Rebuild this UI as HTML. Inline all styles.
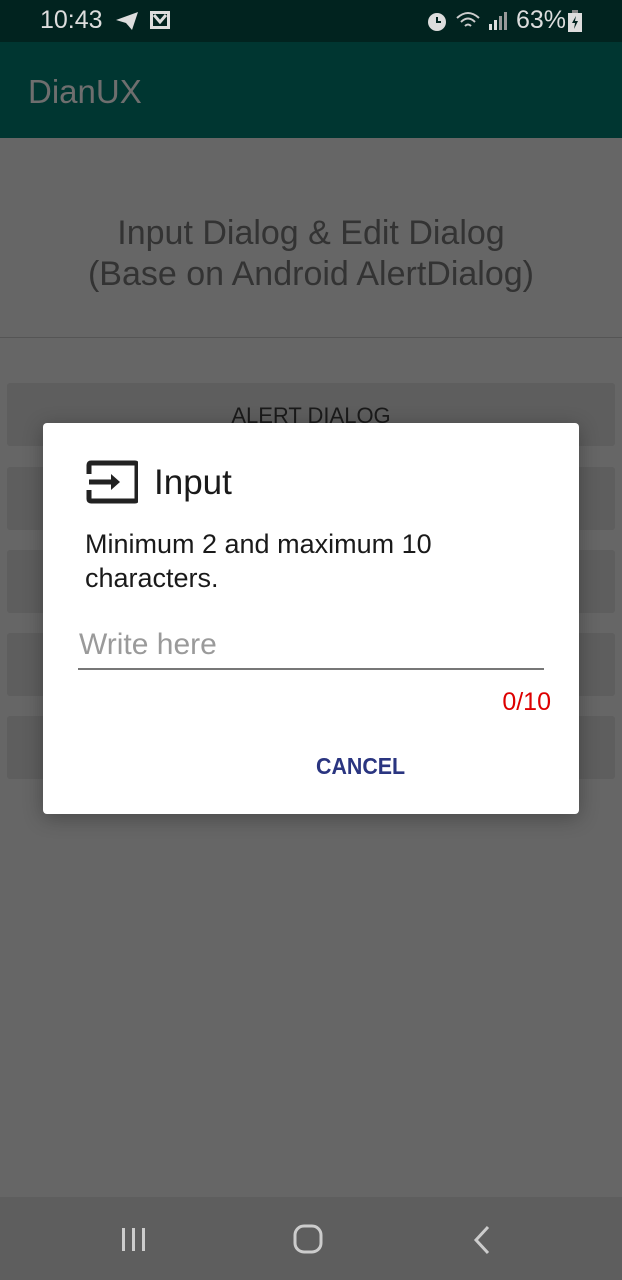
<!DOCTYPE html>
<html><head><meta charset="utf-8"><style>
*{margin:0;padding:0;box-sizing:border-box}
body{width:622px;height:1280px;overflow:hidden;background:#666;font-family:"Liberation Sans",sans-serif;position:relative}
.abs{position:absolute}
.sb{top:0;left:0;width:622px;height:42px;background:#01231f;color:#ddd;font-size:25px}
.tb{top:42px;left:0;width:622px;height:96px;background:#003631}
.btn{left:7px;width:608px;height:63px;background:#5e5e5e;border-radius:3px}
.nav{top:1197px;left:0;width:622px;height:83px;background:#5e5e5e}
.dlg{left:43px;top:423px;width:536px;height:391px;background:#fff;border-radius:4px;box-shadow:0 4px 20px rgba(0,0,0,.3)}
</style></head><body>
<div class="abs sb">
<span class="abs" style="left:40px;top:6px">10:43</span>
<svg class="abs" style="left:114px;top:10px" width="26" height="22" viewBox="0 0 26 22"><path d="M2 10 L24 2 L18 20 L12 13 Z" fill="#ddd"/></svg>
<svg class="abs" style="left:150px;top:11px" width="20" height="18" viewBox="0 0 20 18"><rect x="1.5" y="1.5" width="17" height="15" fill="none" stroke="#ddd" stroke-width="3"/><path d="M4 4 L10 11 L16 4" fill="none" stroke="#ddd" stroke-width="3"/></svg>
<svg class="abs" style="left:425px;top:9px" width="24" height="24" viewBox="0 0 24 24"><circle cx="12" cy="13" r="9" fill="#ddd"/><path d="M12 8v5h4" stroke="#01231f" stroke-width="2" fill="none"/></svg>
<svg class="abs" style="left:455px;top:10px" width="52" height="22" viewBox="0 0 52 22"><path d="M2 8 Q13 -2 24 8 M6 12 Q13 5 20 12 M10 16 Q13 13 16 16" stroke="#ccc" stroke-width="2" fill="none"/><rect x="34" y="14" width="3" height="6" fill="#ddd"/><rect x="39" y="10" width="3" height="10" fill="#ddd"/><rect x="44" y="6" width="3" height="14" fill="#999"/><rect x="49" y="2" width="3" height="18" fill="#999"/></svg>
<span class="abs" style="left:516px;top:6px">63%</span>
<svg class="abs" style="left:567px;top:9px" width="16" height="24" viewBox="0 0 16 24"><rect x="1" y="4" width="14" height="19" fill="#ddd"/><rect x="5" y="1" width="6" height="3" fill="#888"/><path d="M9 7 L5 14 H8 L7 20 L11 12 H8Z" fill="#01231f"/></svg>
</div>
<div class="abs tb"><span class="abs" style="left:28px;top:31px;font-size:33px;color:#6e6e6e">DianUX</span></div>
<div class="abs" style="top:213px;left:0;width:622px;text-align:center;font-size:34px;line-height:41px;color:#333">Input Dialog &amp; Edit Dialog<br>(Base on Android AlertDialog)</div>
<div class="abs" style="top:337px;left:0;width:622px;height:1px;background:#555"></div>
<div class="abs btn" style="top:383px"><div style="text-align:center;font-size:22px;color:#1a1a1a;padding-top:20px">ALERT DIALOG</div></div>
<div class="abs btn" style="top:467px"></div>
<div class="abs btn" style="top:550px"></div>
<div class="abs btn" style="top:633px"></div>
<div class="abs btn" style="top:716px"></div>
<div class="abs dlg">
<svg class="abs" style="left:43px;top:37px" width="52" height="44" viewBox="0 0 52 44"><path d="M3 14 V5 Q3 3 5 3 H49 Q51 3 51 5 V39 Q51 41 49 41 H5 Q3 41 3 39 V30" fill="none" stroke="#222" stroke-width="5"/><path d="M3 22 H30" stroke="#222" stroke-width="5"/><path d="M25 14 L34 22 L25 30Z" fill="#222"/></svg>
<span class="abs" style="left:111px;top:40px;font-size:35px;color:#1a1a1a">Input</span>
<div class="abs" style="left:42px;top:104px;font-size:27px;line-height:34px;color:#1a1a1a">Minimum 2 and maximum 10<br>characters.</div>
<span class="abs" style="left:36px;top:205px;font-size:30px;color:#9a9a9a">Write here</span>
<div class="abs" style="left:35px;top:245px;width:466px;height:2px;background:#777"></div>
<span class="abs" style="right:28px;top:265px;font-size:25px;color:#d00">0/10</span>
<span class="abs" style="left:273px;top:330px;font-size:23px;color:#2a3580;font-weight:bold;transform:scaleX(.93);transform-origin:left">CANCEL</span>
</div>
<div class="abs nav">
<svg class="abs" style="left:120px;top:30px" width="30" height="26"><rect x="2" y="1" width="3" height="23" fill="#ccc"/><rect x="12" y="1" width="3" height="23" fill="#ccc"/><rect x="22" y="1" width="3" height="23" fill="#ccc"/></svg>
<svg class="abs" style="left:293px;top:27px" width="30" height="30"><rect x="2" y="2" width="26" height="26" rx="9" fill="none" stroke="#ccc" stroke-width="3"/></svg>
<svg class="abs" style="left:472px;top:28px" width="20" height="30"><path d="M16 2 L4 15 L16 28" fill="none" stroke="#ccc" stroke-width="3"/></svg>
</div>
</body></html>
